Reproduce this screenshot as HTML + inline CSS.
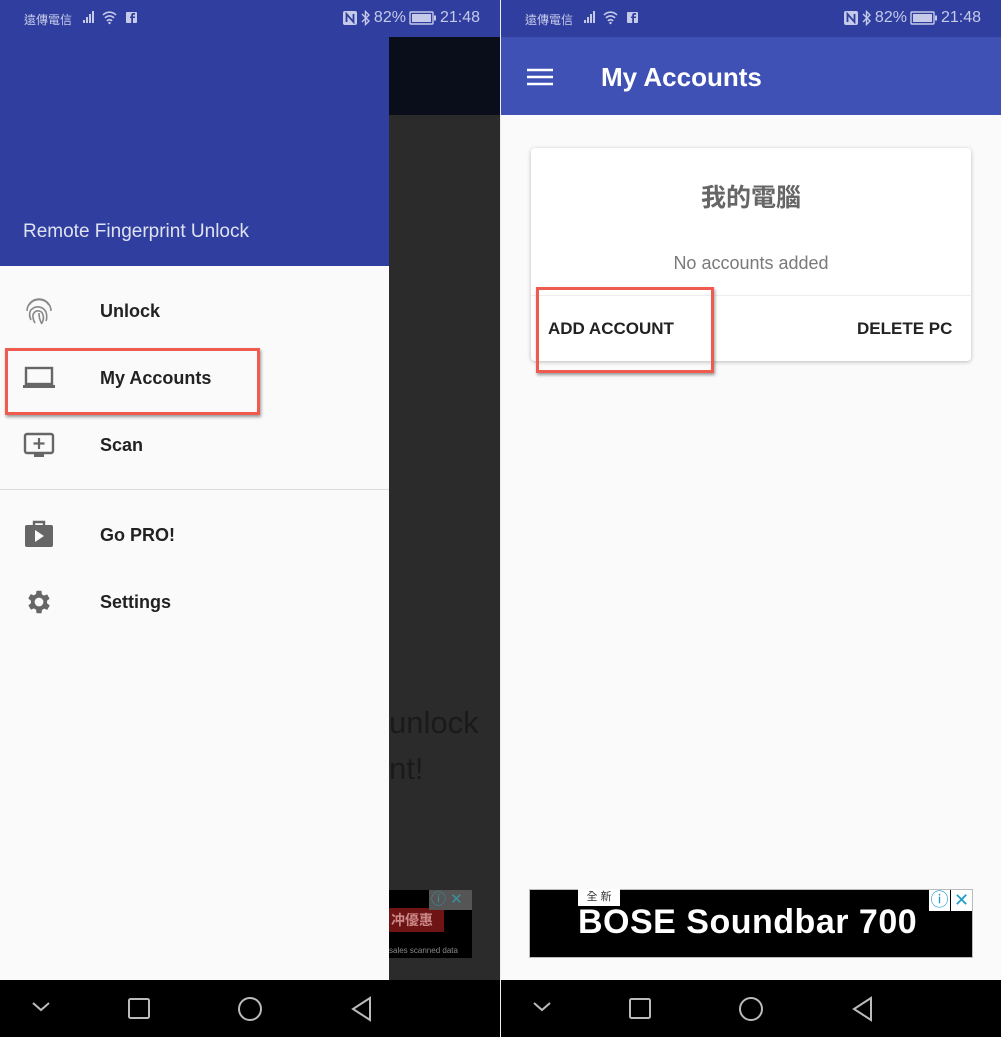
<!DOCTYPE html>
<html><head><meta charset="utf-8">
<style>
*{margin:0;padding:0;box-sizing:border-box}
body{width:1001px;height:1037px;position:relative;background:#fff;font-family:"Liberation Sans","Noto Sans CJK TC",sans-serif;overflow:hidden}
.abs{position:absolute}
.sb{position:absolute;top:0;height:37px;background:#303f9f;color:#c5cae9;font-size:13px}
.sb .l{position:absolute;left:24px;top:11px;font-size:12px}
.sb .ic{position:absolute;left:83px;top:10px}
.sb .r{position:absolute;right:20px;top:9px;font-size:16px;display:flex;align-items:center;gap:3px}
.nav{position:absolute;top:980px;height:57px;background:#000}
.item{position:absolute;left:100px;font-size:18px;font-weight:bold;color:#222}
</style></head><body>

<!-- LEFT PANEL -->
<div class="abs" style="left:0;top:0;width:500px;height:1037px;background:#2b2b2b"></div>
<div class="abs" style="left:389px;top:37px;width:111px;height:78px;background:#0a0d1a"></div>
<div class="abs" style="left:389px;top:700px;font-size:31px;color:#1a1a1a;line-height:46px">unlock<br>nt!</div>
<div class="abs" style="left:389px;top:890px;width:83px;height:68px;background:#000"></div>
<div class="abs" style="left:389px;top:908px;width:55px;height:24px;background:#6e1414;color:#c88;font-size:14px;font-weight:bold;padding-left:2px;line-height:24px">冲優惠</div>
<div class="abs" style="left:389px;top:946px;font-size:8px;color:#888">sales scanned data</div>
<div class="abs" style="left:429px;top:890px;width:43px;height:20px;background:#555;font-size:15px;line-height:20px;padding-left:2px;color:#3a8fa0">ⓘ ✕</div>

<!-- status bars -->
<div class="sb" style="left:0;width:500px">
 <span class="l">遠傳電信</span>
 <svg class="ic" width="60" height="16" fill="#c5cae9"><rect x="0" y="10" width="2" height="3"/><rect x="3" y="7" width="2" height="6"/><rect x="6" y="4" width="2" height="9"/><rect x="9" y="1" width="2" height="12"/><path d="M20 5a9 9 0 0 1 13 0M22 8a6 6 0 0 1 9 0M24 11a3 3 0 0 1 5 0" stroke="#c5cae9" stroke-width="1.6" fill="none"/><circle cx="26.5" cy="13" r="1.2"/><rect x="43" y="2" width="11" height="11" rx="1"/><path d="M50 13V8h2V6.5h-2V5.5c0-.6.3-.8.8-.8H52V3h-1.6c-1.6 0-2.2.9-2.2 2.3V6.5H47V8h1.2v5z" fill="#303f9f"/></svg>
 <span class="r"><svg width="16" height="16"><rect x="1" y="1" width="14" height="14" rx="2" fill="#c5cae9"/><path d="M4.5 12V4l7 8V4" stroke="#303f9f" stroke-width="1.8" fill="none"/></svg><svg width="10" height="16"><path d="M1 4l7 7-3.5 3.5v-13L8 5 1 12" stroke="#c5cae9" stroke-width="1.4" fill="none"/></svg>82% <svg width="28" height="14"><rect x="1" y="1" width="23" height="12" rx="1" fill="none" stroke="#c5cae9" stroke-width="1.4"/><rect x="3" y="3" width="19" height="8" fill="#c5cae9"/><rect x="25" y="4.5" width="2" height="5" fill="#c5cae9"/></svg> 21:48</span>
</div>
<div class="abs" style="left:0;top:37px;width:389px;height:229px;background:#303f9f"></div>
<div class="abs" style="left:23px;top:221px;color:#dfe2f2;font-size:19px">Remote Fingerprint Unlock</div>
<div class="abs" style="left:0;top:266px;width:389px;height:714px;background:#fafafa"></div>
<!-- icons -->
<svg class="abs" style="left:24px;top:296px" width="30" height="32" viewBox="0 0 30 32" fill="none" stroke="#888" stroke-width="1.6">
 <path d="M5 9a12 12 0 0 1 20 0M3 15a12 12 0 0 1 24 0M7 24c-2-4-2-9 1-11a9 9 0 0 1 14 3c1 3 1 7 0 9M11 27c-2-3-3-8-1-10a5 5 0 0 1 9 2c1 3 0 6-1 8M15 17c0 4 1 8 3 11"/>
</svg>
<svg class="abs" style="left:22px;top:366px" width="34" height="24" viewBox="0 0 34 24" fill="#666"><rect x="4" y="2" width="26" height="16" fill="none" stroke="#666" stroke-width="2.4"/><rect x="1" y="19" width="32" height="3"/></svg>
<svg class="abs" style="left:23px;top:432px" width="32" height="28" viewBox="0 0 32 28"><rect x="2" y="2" width="28" height="19" rx="2" fill="none" stroke="#666" stroke-width="2.4"/><path d="M16 6v11M10.5 11.5h11" stroke="#666" stroke-width="2.2"/><rect x="11" y="22" width="10" height="3" fill="#666"/></svg>
<svg class="abs" style="left:24px;top:520px" width="30" height="28" viewBox="0 0 30 28"><path d="M10 5V2h10v3" fill="none" stroke="#666" stroke-width="2.4"/><rect x="1" y="5" width="28" height="22" rx="2" fill="#666"/><path d="M11 10v12l9-6z" fill="#fafafa"/></svg>
<svg class="abs" style="left:24px;top:587px" width="30" height="30" viewBox="0 0 24 24"><path fill="#666" d="M19.4 13a7.5 7.5 0 0 0 0-2l2.1-1.6-2-3.5-2.5 1a7 7 0 0 0-1.7-1L15 3h-4l-.4 2.7a7 7 0 0 0-1.7 1l-2.5-1-2 3.5L6.6 11a7.5 7.5 0 0 0 0 2l-2.1 1.6 2 3.5 2.5-1a7 7 0 0 0 1.7 1L11 21h4l.4-2.7a7 7 0 0 0 1.7-1l2.5 1 2-3.5zM13 15.5a3.5 3.5 0 1 1 0-7 3.5 3.5 0 0 1 0 7z" transform="translate(-1 0)"/></svg>
<div class="item" style="top:301px">Unlock</div>
<div class="item" style="top:368px">My Accounts</div>
<div class="item" style="top:435px">Scan</div>
<div class="abs" style="left:0;top:489px;width:389px;height:1px;background:#ddd"></div>
<div class="item" style="top:525px">Go PRO!</div>
<div class="item" style="top:592px">Settings</div>
<div class="abs" style="left:5px;top:348px;width:255px;height:67px;border:3px solid #ef5b4f;box-shadow:1px 2px 3px rgba(0,0,0,.4)"></div>
<div class="nav" style="left:0;width:500px"></div>

<div class="abs" style="left:500px;top:0;width:1px;height:1037px;background:#eee"></div>

<!-- RIGHT PANEL -->
<div class="abs" style="left:501px;top:0;width:500px;height:1037px;background:#fafafa"></div>
<div class="sb" style="left:501px;width:500px">
 <span class="l">遠傳電信</span>
 <svg class="ic" width="60" height="16" fill="#c5cae9"><rect x="0" y="10" width="2" height="3"/><rect x="3" y="7" width="2" height="6"/><rect x="6" y="4" width="2" height="9"/><rect x="9" y="1" width="2" height="12"/><path d="M20 5a9 9 0 0 1 13 0M22 8a6 6 0 0 1 9 0M24 11a3 3 0 0 1 5 0" stroke="#c5cae9" stroke-width="1.6" fill="none"/><circle cx="26.5" cy="13" r="1.2"/><rect x="43" y="2" width="11" height="11" rx="1"/><path d="M50 13V8h2V6.5h-2V5.5c0-.6.3-.8.8-.8H52V3h-1.6c-1.6 0-2.2.9-2.2 2.3V6.5H47V8h1.2v5z" fill="#303f9f"/></svg>
 <span class="r"><svg width="16" height="16"><rect x="1" y="1" width="14" height="14" rx="2" fill="#c5cae9"/><path d="M4.5 12V4l7 8V4" stroke="#303f9f" stroke-width="1.8" fill="none"/></svg><svg width="10" height="16"><path d="M1 4l7 7-3.5 3.5v-13L8 5 1 12" stroke="#c5cae9" stroke-width="1.4" fill="none"/></svg>82% <svg width="28" height="14"><rect x="1" y="1" width="23" height="12" rx="1" fill="none" stroke="#c5cae9" stroke-width="1.4"/><rect x="3" y="3" width="19" height="8" fill="#c5cae9"/><rect x="25" y="4.5" width="2" height="5" fill="#c5cae9"/></svg> 21:48</span>
</div>
<div class="abs" style="left:501px;top:37px;width:500px;height:78px;background:#3f51b5"></div>
<svg class="abs" style="left:527px;top:68px" width="26" height="18"><path d="M0 2h26M0 9h26M0 16h26" stroke="#fff" stroke-width="2.6"/></svg>
<div class="abs" style="left:601px;top:62px;color:#fff;font-size:26px;font-weight:bold">My Accounts</div>
<div class="abs" style="left:531px;top:148px;width:440px;height:213px;background:#fff;border-radius:4px;box-shadow:0 1px 4px rgba(0,0,0,.25)"></div>
<div class="abs" style="left:531px;top:178px;width:440px;text-align:center;font-size:25px;font-weight:bold;color:#666">我的電腦</div>
<div class="abs" style="left:531px;top:253px;width:440px;text-align:center;font-size:18px;color:#7a7a7a">No accounts added</div>
<div class="abs" style="left:531px;top:295px;width:440px;height:1px;background:#eee"></div>
<div class="abs" style="left:548px;top:319px;font-size:17px;font-weight:bold;color:#222">ADD ACCOUNT</div>
<div class="abs" style="left:857px;top:319px;font-size:17px;font-weight:bold;color:#222">DELETE PC</div>
<div class="abs" style="left:536px;top:287px;width:178px;height:86px;border:3px solid #ef5b4f;box-shadow:1px 2px 3px rgba(0,0,0,.4)"></div>
<div class="abs" style="left:529px;top:889px;width:444px;height:69px;background:#000;border:1px solid #bbb"></div>
<div class="abs" style="left:578px;top:889px;width:42px;height:17px;background:#fff;font-size:11px;color:#333;text-align:center;line-height:17px">全 新</div>
<div class="abs" style="left:578px;top:903px;color:#fff;font-size:34px;font-weight:bold;letter-spacing:0.5px">BOSE Soundbar 700</div>
<div class="abs" style="left:929px;top:890px;width:21px;height:21px;background:#fff;color:#1a9bc9;font-size:18px;text-align:center;line-height:21px">ⓘ</div>
<div class="abs" style="left:951px;top:890px;width:21px;height:21px;background:#fff;color:#1a9bc9;font-size:18px;text-align:center;line-height:21px">✕</div>
<div class="nav" style="left:501px;width:500px"></div>

<!-- nav icons -->
<svg class="abs" style="left:0;top:980px" width="1001" height="57" fill="none" stroke="#bbb" stroke-width="2">
 <path d="M33 23l8 7 8-7"/><rect x="129" y="19" width="20" height="19" rx="1.5"/><circle cx="250" cy="29" r="11"/><path d="M370 18v22l-17-11z"/>
 <path d="M534 23l8 7 8-7"/><rect x="630" y="19" width="20" height="19" rx="1.5"/><circle cx="751" cy="29" r="11"/><path d="M871 18v22l-17-11z"/>
</svg>
</body></html>
